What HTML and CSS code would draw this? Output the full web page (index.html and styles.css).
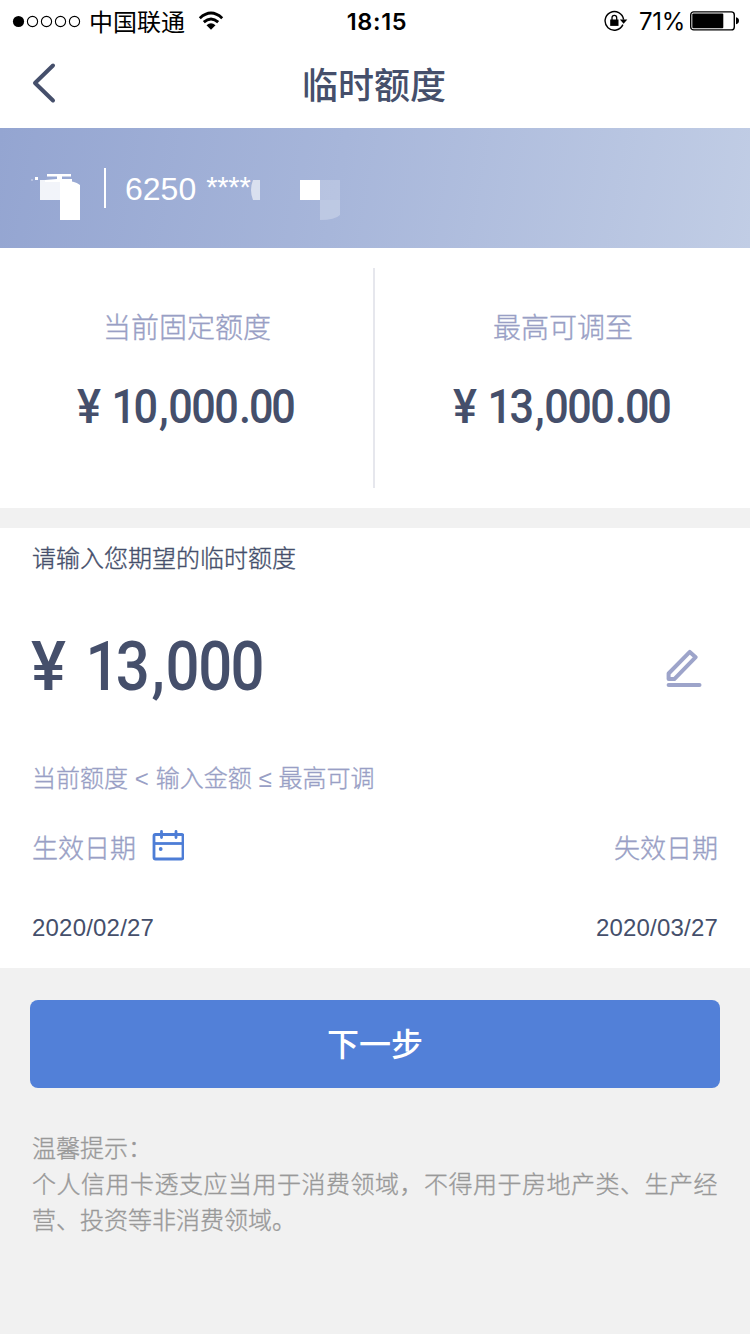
FILE: index.html
```html
<!DOCTYPE html>
<html lang="zh-CN">
<head>
<meta charset="utf-8">
<title>临时额度</title>
<link rel="stylesheet" href="styles.css">
</head>
<body>
<header class="status">
  <div class="status-left">
    <svg class="signal" width="70" height="14" viewBox="0 0 70 14"><circle cx="6.5" cy="7.5" r="5.6"/><g fill="none" stroke="#000" stroke-width="1.1"><circle cx="20.5" cy="7.5" r="5.1"/><circle cx="34.5" cy="7.5" r="5.1"/><circle cx="48.5" cy="7.5" r="5.1"/><circle cx="62.5" cy="7.5" r="5.1"/></g></svg>
    <span class="carrier">中国联通</span>
    <svg class="wifi" width="26" height="20" viewBox="0 0 26 20"><g fill="none" stroke="#000" stroke-width="2.9"><path d="M1.8 7.2Q13-3 24.2 7.2"/><path d="M5.8 11.2Q13 4.7 20.2 11.2"/></g><path d="M8.5 14.2Q13 10.3 17.5 14.2L13 18.8Z"/></svg>
  </div>
  <span class="clock">18:15</span>
  <div class="status-right">
    <svg class="lock" width="24" height="22" viewBox="0 0 24 22"><path d="M18.9 14.6A9.3 9.3 0 1 1 19.6 9.7" fill="none" stroke="#000" stroke-width="1.4"/><path d="M15.9 9.5h7.4l-3.7 4.2z"/><path d="M6.2 9.5h8.3v6.4H6.2z"/><path d="M8 10V7.7a2.35 2.35 0 0 1 4.7 0V10" fill="none" stroke="#000" stroke-width="1.3"/></svg>
    <span class="percent">71%</span>
    <svg class="battery" width="50" height="20" viewBox="0 0 50 20"><rect x=".7" y=".9" width="43.6" height="18" rx="3" fill="none" stroke="#000" stroke-width="1.4"/><rect x="2.3" y="2.6" width="31" height="14.6" rx="1"/><path d="M46 6.3q3 .7 3 3.5t-3 3.5z"/></svg>
  </div>
</header>
<nav class="nav">
  <svg class="back" width="24" height="42" viewBox="0 0 24 42"><path d="M21 3.5L3 21L21 38.5" fill="none" stroke="#454f6b" stroke-width="4" stroke-linecap="round" stroke-linejoin="round"/></svg>
  <h1 class="title">临时额度</h1>
  <span class="nav-end"></span>
</nav>
<section class="card">
  <svg class="bank" width="72" height="60" viewBox="0 0 72 60" fill="#fff"><rect x="31" y="19" width="2" height="2" opacity=".3"/><rect x="35" y="17" width="3" height="3"/><rect x="47" y="14" width="24" height="2.5"/><path d="M57 16h5v3h10v3H45v-2l12-1z"/><rect x="40" y="20" width="20" height="20" opacity=".87"/><path d="M60 21q13-1 20 4v35H60z"/></svg>
  <span class="card-line"></span>
  <span class="card-no">6250</span><span class="card-mask">****</span>
  <svg class="redacted" width="90" height="40" viewBox="0 0 90 40" fill="#fff"><path d="M10 0v20H3Q-1 10 3 0z" opacity=".6"/><path d="M50 0h20v20H50z"/><path d="M70 0h20v20H70z" opacity=".2"/><path d="M70 20h20v15q-5 5-20 5z" opacity=".26"/></svg>
</section>
<main>
  <section class="limits">
    <div class="limit">
      <span class="limit-label">当前固定额度</span>
      <svg class="limit-value" width="220" height="50"><text class="yen" x="0" y="39" textLength="24" lengthAdjust="spacingAndGlyphs">¥</text><text transform="scale(.9 1)" x="38.3 62.8 91.1 101.4 127 152.6 180 191.1 215.9" y="39">10,000.00</text></svg>
    </div>
    <div class="limit">
      <span class="limit-label">最高可调至</span>
      <svg class="limit-value" width="220" height="50"><text class="yen" x="0" y="39" textLength="24" lengthAdjust="spacingAndGlyphs">¥</text><text transform="scale(.9 1)" x="38.3 62.8 91.1 101.4 127 152.6 180 191.1 215.9" y="39">13,000.00</text></svg>
    </div>
  </section>
  <section class="request">
    <p class="prompt">请输入您期望的临时额度</p>
    <div class="amount-row">
      <svg class="amount" width="240" height="70"><text class="yen" x="-1" y="55" textLength="35" lengthAdjust="spacingAndGlyphs">¥</text><text transform="scale(.88 1)" x="60.8 95.1 135.8 151.6 188.8 225.5" y="55">13,000</text></svg>
      <svg class="edit" width="38" height="40" viewBox="0 0 38 40"><g fill="none" stroke="#9da4ca" stroke-width="4" stroke-linejoin="round" stroke-linecap="round"><path d="M2.6 25.5L23.8 3.9L29.7 9.2L8.3 31.1H2.6Z" stroke-width="4"/><path d="M2.6 36.9H33.5"/></g></svg>
    </div>
    <p class="rule">当前额度 <i>&lt;</i> 输入金额 <i>≤</i> 最高可调</p>
    <div class="dates labels">
      <span class="with-icon">生效日期
        <svg width="32" height="31" viewBox="0 0 32 31" fill="none" stroke="#4d7dd6" stroke-width="2.8"><rect x="2" y="4.5" width="29" height="24.5" rx="1.5"/><path d="M2 13.5H31"/><path d="M9.5 1.5v6M24 1.5v6" stroke-linecap="round"/><circle cx="8.7" cy="19" r="1.9" fill="#4d7dd6" stroke="none"/></svg>
      </span>
      <span>失效日期</span>
    </div>
    <div class="dates values"><span>2020/02/27</span><span>2020/03/27</span></div>
  </section>
  <button class="next">下一步</button>
  <section class="tips">
    <p>温馨提示：</p>
    <p class="tip-line">个人信用卡透支应当用于消费领域，不得用于房地产类、生产经</p>
    <p>营、投资等非消费领域。</p>
  </section>
</main>
</body>
</html>
```
FILE: styles.css
```css
* { box-sizing: border-box; }
body {
  margin: 0;
  width: 750px;
  height: 1334px;
  overflow: hidden;
  background: #f1f1f1;
  color: #454f6b;
  font-family: "Liberation Sans", "Noto Sans CJK SC", sans-serif;
}
p, h1 { margin: 0; white-space: nowrap; }
svg { display: block; flex: none; }
.status {
  display: grid;
  grid-template-columns: 1fr auto 1fr;
  align-items: center;
  height: 40px;
  padding: 0 10px 0 12px;
  background: #fff;
  color: #000;
}
.status-left, .status-right { display: flex; align-items: center; }
.status-right { justify-content: flex-end; }
.carrier {
  margin-left: 7px;
  font-family: "Noto Sans CJK SC", sans-serif;
  font-size: 24px;
  line-height: 40px;
}
.wifi { margin-left: 13px; }
.clock { padding: 2px 0 0 2px; font: 600 23.5px/40px Inter, sans-serif; letter-spacing: .7px; }
.percent { margin: 2px 5px 0 11px; font: 400 24px/40px Inter, sans-serif; letter-spacing: -.3px; }
.nav {
  display: grid;
  grid-template-columns: 100px 1fr 100px;
  align-items: center;
  height: 88px;
  padding: 0 2px 2px 0;
  background: #fff;
}
.back { margin-left: 32px; }
.title {
  text-align: center;
  font: 500 36px/48px "Noto Sans CJK SC", sans-serif;
}
.card {
  display: flex;
  align-items: flex-start;
  height: 120px;
  padding-top: 32px;
  background: linear-gradient(100deg, #94a5d1 0%, #a7b6da 45%, #c1cde5 100%);
  color: #fff;
}
.bank { overflow: visible; }
.card-line { width: 2px; height: 40px; margin: 8px 0 0 32px; background: #fff; }
.card-no { margin-left: 19px; font-size: 32px; line-height: 58px; }
.card-mask { width: 44px; margin-left: 10px; font-size: 29px; line-height: 54px; letter-spacing: -.2px; }
.redacted { margin: 20px 0 0 0; }
.limits {
  display: grid;
  grid-template-columns: 374px 374px;
  gap: 2px;
  height: 260px;
  background: linear-gradient(#e6e7ed, #e6e7ed) 373px 20px / 2px 220px no-repeat #fff;
}
.limit { display: flex; flex-direction: column; align-items: center; padding-top: 58px; }
.limit-label, .prompt, .rule, .labels, .tips { -webkit-text-stroke: .35px currentColor; }
.limit-label {
  color: #999fc5;
  font: 300 28px/40px "Noto Sans CJK SC", sans-serif;
}
.limit-value { margin-top: 38px; overflow: visible; }
.limit-value text { font: 500 48px Roboto, sans-serif; fill: #454f6b; }
.request { height: 440px; margin-top: 20px; padding: 0 32px; background: #fff; }
.prompt { padding-top: 11px; font: 300 24px/36px "Noto Sans CJK SC", sans-serif; }
.amount-row { display: flex; justify-content: space-between; padding: 60px 14px 0 0; height: 170px; }
.amount { overflow: visible; }
.amount text { font: 500 68px Roboto, sans-serif; fill: #454f6b; }
.edit { margin-top: 13px; }
.rule { padding-top: 14px; color: #999fc5; font: 300 24px/36px "Noto Sans CJK SC", sans-serif; }
.rule i { margin: 0 1.5px; font-family: "Liberation Sans", sans-serif; font-style: normal; -webkit-text-stroke: 0; }
.dates { display: flex; justify-content: space-between; align-items: center; }
.labels { height: 40px; margin-top: 30px; color: #999fc5; font: 300 26px/40px "Noto Sans CJK SC", sans-serif; }
.with-icon { display: flex; gap: 16px; align-items: center; }
.with-icon svg { margin-top: -4px; }
.values { margin-top: 43px; height: 36px; font-size: 24px; letter-spacing: .2px; }
.next {
  display: block;
  width: 690px;
  height: 88px;
  margin: 32px 30px 0;
  padding: 0 0 4px;
  border: 0;
  border-radius: 8px;
  background: #5280d8;
  color: #fff;
  font: 500 32px/84px "Noto Sans CJK SC", sans-serif;
}
.tips { padding: 41px 32px 0; color: #999; font: 300 24px/36px "Noto Sans CJK SC", sans-serif; }
.tip-line { letter-spacing: .5px; }
```
